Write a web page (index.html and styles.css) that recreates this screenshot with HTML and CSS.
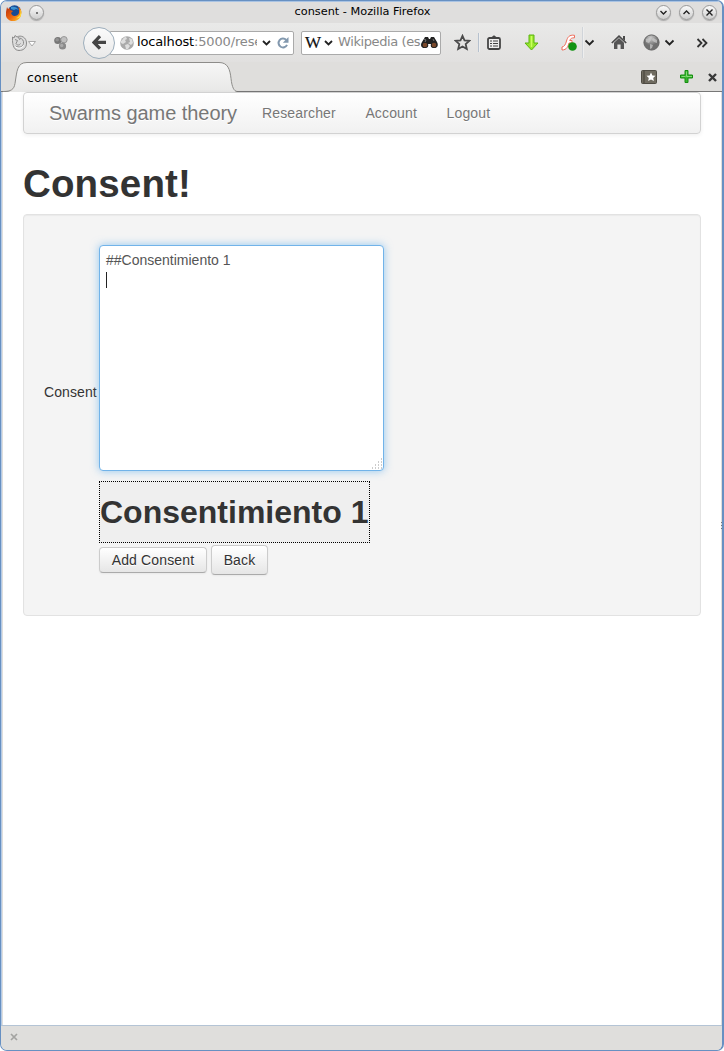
FILE: index.html
```html
<!DOCTYPE html>
<html lang="en">
<head>
<meta charset="utf-8">
<title>consent - Mozilla Firefox</title>
<link rel="stylesheet" href="styles.css">
</head>
<body>
<div class="window">
  <header class="titlebar">
    <svg class="fox" width="16" height="16" viewBox="0 0 16 16"><defs><linearGradient id="fire" x1="0" y1="0" x2="1" y2="1"><stop offset="0" stop-color="#b92e0b"/><stop offset=".55" stop-color="#ed6810"/><stop offset="1" stop-color="#ffd22f"/></linearGradient></defs><circle cx="8.5" cy="7" r="6.7" fill="#174b94"/><path d="M5 2C8 1 11 2 13 5l-3-1-2 1-3-1z" fill="#3b91d1"/><path d="M1 2l1 2 2-1v2l3 1-2 2 1 2c2 2 6 1 7-2V4l-1-2c3 1 4 4 3 8-1 4-4 6-8 6-5 0-8-4-7-9z" fill="url(#fire)"/><path d="M13 3c3 4 1 9-3 10 3 1 5-1 5-3 1-3 0-5-2-7z" fill="#ffdd38"/></svg>
    <span class="round pin"><i></i></span>
    <span class="window-title">consent - Mozilla Firefox</span>
    <div class="controls">
      <span class="round"><svg width="9" height="9" viewBox="0 0 9 9"><path d="M1.5 3l3 3 3-3"/></svg></span>
      <span class="round"><svg width="9" height="9" viewBox="0 0 9 9"><path d="M1.5 6l3-3 3 3"/></svg></span>
      <span class="round"><svg width="9" height="9" viewBox="0 0 9 9"><path d="M1.5 1.5l6 6m0-6l-6 6"/></svg></span>
    </div>
  </header>
  <div class="toolbar">
    <svg class="swirl" width="26" height="18" viewBox="0 0 26 18"><path d="M1.500 3l1.500 1 1-2.500L6 3C10 .5 15.500 3.500 15.500 9S12 16.500 8 16.500 1 13 1.500 3z" fill="#dcdcdc" stroke="#8c8c8c"/><path d="M4 5.500l2.500 1L5 9.500c1 2 3.500 2 4.500 0M8.500 4c3 .5 4.500 3 4 5.500-.7 3.500-4.500 4.500-8 2.500M7 3l2 3" fill="none" stroke="#8c8c8c"/><path d="M4 12.500c2.500 2.500 7 2 8.500-1" fill="none" stroke="#fff"/><path d="M17.500 7.500h7L21 12z" fill="#fff" stroke="#aaa"/></svg>
    <svg class="molecule" width="16" height="16" viewBox="0 0 16 16"><circle cx="4.8" cy="5.5" r="3.6" fill="#777"/><circle cx="4.2" cy="4.8" r="1.8" fill="#929292"/><circle cx="11" cy="4.7" r="3.2" fill="#c0c0c0" stroke="#999"/><circle cx="9.5" cy="11" r="3.6" fill="#8a8a8a"/><circle cx="8.7" cy="10.5" r="1.7" fill="#aaa"/></svg>
    <div class="location">
      <span class="back"><svg width="15" height="15" viewBox="0 0 15 15"><path d="M8 1.2L2 7.4l6 6.2M2.5 7.4H14" fill="none" stroke="#454545" stroke-width="3.2"/></svg></span>
      <div class="url">
        <svg width="14" height="14" viewBox="0 0 14 14"><circle cx="7" cy="7" r="6.8" fill="#aaa"/><path d="M1 5c2-1 2-4 5-4l1 2-2 1 1 2-3 2-2-1zM9 2l3 1 1 4-2 2-3-2 2-1zM5 9l3-1 2 2-2 3H6z" fill="#dedede"/></svg>
        <span class="address">localhost<span>:5000/rese</span></span>
        <svg class="chev" width="11" height="10" viewBox="0 0 11 10"><path d="M2 3l3.5 3.5L9 3"/></svg>
        <svg class="reload" width="12" height="12" viewBox="0 0 12 12"><path d="M10 7.8A4.4 4.4 0 1 1 9.2 3" fill="none" stroke="#8298ae" stroke-width="2"/><path d="M11.5 0v5.8H5.8z" fill="#8298ae"/></svg>
      </div>
    </div>
    <div class="search">
      <span class="w">W</span>
      <svg class="chev" width="11" height="10" viewBox="0 0 11 10"><path d="M2 3l3.5 3.5L9 3"/></svg>
      <span class="hint">Wikipedia (es</span>
      <svg class="binoc" width="17" height="13" viewBox="0 0 17 13"><path d="M4 1h3l1 2h1l1-2h3l3 5c2 4 0 6-3 6-2 0-4-1-3-4H7c1 3-1 4-3 4-4 0-5-3-3-6z" fill="#222"/><circle cx="4" cy="9" r="2.3" fill="#7a482a"/><circle cx="13" cy="9" r="2.3" fill="#7a482a"/><path d="M3 3l2 1-1 2M12 3l1 2" stroke="#777" fill="none"/></svg>
    </div>
    <svg class="star" width="17" height="17" viewBox="0 0 17 17"><path d="M8.5 1.8l2 4.5 4.9.5-3.7 3.3 1.1 4.9-4.3-2.5L4.200 15l1.100-4.900L1.600 6.800l4.900-.5z" fill="none" stroke="#4b4b4b" stroke-width="1.800"/></svg>
    <i class="sep"></i>
    <svg class="clip" width="14" height="15" viewBox="0 0 14 15"><path d="M4 2.500L7 .3l3 2.200z" fill="#444"/><rect x="1" y="3" width="12" height="11" rx="1.500" fill="#eee" stroke="#444" stroke-width="1.800"/><path d="M3 6h2m1 0h5M3 8.500h2m1 0h5M3 11h2m1 0h5" stroke="#444" stroke-width="1.200"/></svg>
    <svg class="down" width="15" height="17" viewBox="0 0 15 17"><path d="M5 1h5v8h4l-6.500 7L1 9h4z" fill="#97e62c" stroke="#5cb411" stroke-linejoin="round"/><path d="M7.500 2v11" stroke="#cbff5e" stroke-width="1.500"/></svg>
    <svg class="flash" width="16" height="17" viewBox="0 0 16 17"><path d="M13.500 1.300C8 .5 6.500 3.500 5.500 7S3.500 12.500 1 13v3c5 0 6-4 7-7h3V6.500H8.700c.8-2 2-2.800 4.800-2.700z" fill="#fff" stroke="#ee6b59"/><circle cx="11.500" cy="12.500" r="4.300" fill="#139313"/></svg>
    <i class="sep flash-sep"></i>
    <svg class="chev flash-chev" width="11" height="10" viewBox="0 0 11 10"><path d="M1.500 2.500l4 4 4-4"/></svg>
    <svg class="home" width="16" height="15" viewBox="0 0 16 15"><path d="M.8 8L8 1.200 15.200 8" fill="none" stroke="#4a4a4a" stroke-width="1.700"/><path d="M3 7.800L8 3l5 4.800V14H9.600V9.500H6.400V14H3z" fill="#555"/><path d="M12 1h2v5l-2-2z" fill="#4a4a4a"/></svg>
    <svg class="globe" width="17" height="17" viewBox="0 0 17 17"><defs><radialGradient id="metal" cx=".45" cy=".2"><stop stop-color="#ccc"/><stop offset="1" stop-color="#707070"/></radialGradient></defs><circle cx="8.500" cy="8.500" r="7.600" fill="url(#metal)" stroke="#646464"/><path d="M3 5l4-1 1 2-2 3-3-1zM10 4l4 2v3l-3-1-2-2zM7 10l3 1-1 3-2 1z" fill="#ccc" opacity=".7"/></svg>
    <svg class="chev globe-chev" width="11" height="10" viewBox="0 0 11 10"><path d="M1.500 2.500l4 4 4-4"/></svg>
    <svg class="more" width="12" height="10" viewBox="0 0 12 10"><path d="M1.500 1l4 4-4 4M6.500 1l4 4-4 4" fill="none" stroke="#333" stroke-width="1.800"/></svg>
  </div>
  <div class="tabs">
    <div class="tab">
      <svg width="234" height="30" viewBox="0 0 234 30"><defs><linearGradient id="tabfill" x2="0" y2="1"><stop stop-color="#f6f6f6"/><stop offset="1" stop-color="#e8e8e7"/></linearGradient></defs><path d="M0 30c8 0 11-2 12-8C14 9 14 .5 24 .5h192c9 0 11 7 12 16 1 9 3 12.500 6 13.500z" fill="url(#tabfill)"/><path d="M0 29.500c8 0 11-2 12-8C14 9 14 .5 24 .5h192c9 0 11 7 12 16 1 9 3 12.500 6 13" fill="none" stroke="#8d8c89"/></svg>
      <span>consent</span>
    </div>
    <svg class="bookmark" width="16" height="14" viewBox="0 0 16 14"><rect x=".5" y=".5" width="15" height="13" rx="1" fill="#6f6b60" stroke="#4f4c44"/><path d="M3 1v12" stroke="#444037"/><path d="M10 2.500l1.400 3 3.100.3-2.300 2.100.7 3.200-2.900-1.700-2.900 1.700.7-3.200-2.300-2.100 3.100-.3z" fill="#fff"/></svg>
    <svg class="add" width="15" height="15" viewBox="0 0 15 15"><path d="M6 1.500h3V6h4.500v3H9v4.500H6V9H1.500V6H6z" fill="#35b52c" stroke="#168d11" stroke-linejoin="round"/><path d="M7.500 2.500v5H13M2.500 7.500h4" stroke="#85d977" fill="none"/></svg>
    <svg class="close" width="9" height="9" viewBox="0 0 9 9"><path d="M1 1l7 7m0-7L1 8" stroke="#383838" stroke-width="2.400"/></svg>
  </div>
  <main class="page">
    <nav class="navbar"><a class="brand">Swarms game theory</a><a>Researcher</a><a>Account</a><a>Logout</a></nav>
    <h1>Consent!</h1>
    <section class="well">
      <div class="form">
        <label>Consent</label>
        <div class="editor"><span>##Consentimiento 1</span><i class="caret"></i>
          <svg class="grip" width="12" height="12" viewBox="0 0 12 12"><path d="M10 1h1M7 4h1m2 0h1M4 7h1m2 0h1m2 0h1M1 10h1m2 0h1m2 0h1m2 0h1" stroke="#999" stroke-width="1.200"/></svg>
        </div>
        <div class="preview"><h2>Consentimiento 1</h2></div>
        <div class="actions"><button class="add-consent">Add Consent</button><button class="go-back">Back</button></div>
      </div>
    </section>
    <i class="splitter"></i>
  </main>
  <footer><svg width="8" height="8" viewBox="0 0 8 8"><path d="M1 1l6 6m0-6L1 7" stroke="#a3a3a1" stroke-width="1.700"/></svg></footer>
</div>
</body>
</html>
```
FILE: styles.css
```css
* { box-sizing: border-box; }
body { margin: 0; width: 724px; height: 1051px; background: #fff; overflow: hidden; font-family: "Liberation Sans", Arial, sans-serif; }
svg { display: block; flex: none; }
.window { width: 724px; height: 1051px; display: flex; flex-direction: column; border: 1px solid #6790c2; border-right-width: 2px; border-radius: 7px; overflow: hidden; background: #dfdedc; box-shadow: inset 1px 1px #b4cae5; }
.titlebar { height: 22px; padding: 0 5px 0 5px; display: flex; align-items: center; background: #dfdedd; border-top: 1px solid #a9c3e3; position: relative; font: 11.3px "DejaVu Sans", sans-serif; }
.round { width: 15px; height: 15px; border-radius: 50%; border: 1px solid #999; background: linear-gradient(#fafafa, #cecece); box-shadow: 0 1px 1px #aaa; display: flex; align-items: center; justify-content: center; }
.round svg { fill: none; stroke: #222; stroke-width: 1.4; }
.pin { margin-left: 7px; }
.pin i { width: 2px; height: 2px; background: #777; }
.window-title { position: absolute; left: 1px; width: 100%; text-align: center; top: 3px; }
.controls { display: flex; gap: 8px; margin-left: auto; }
.toolbar { height: 39px; display: flex; align-items: center; padding-left: 10px; background: linear-gradient(#e9e9e8, #e1e0df); }
.molecule { margin-left: 16px; margin-right: 14px; }
.location { display: flex; align-items: center; }
.back { width: 32px; height: 32px; border-radius: 50%; border: 1px solid #9daebc; background: linear-gradient(#fbfbfb, #e9e9e9); display: flex; align-items: center; justify-content: center; position: relative; z-index: 1; }
.url { width: 184px; height: 24px; margin-left: -5px; padding-left: 9px; border: 1px solid #aaa; border-radius: 0 2px 2px 0; background: white; display: flex; align-items: center; font: 13px "DejaVu Sans", sans-serif; }
.address { width: 120px; margin-left: 3px; margin-top: -2px; letter-spacing: -.15px; white-space: nowrap; overflow: hidden; }
.address span { color: #888; }
.chev { fill: none; stroke: #222; stroke-width: 1.8; }
.url .chev { margin-left: 4px; }
.reload { margin-left: 5px; }
.search { margin-left: 7px; width: 140px; height: 24px; border: 1px solid #aaa; border-radius: 2px; background: white; display: flex; align-items: center; padding-left: 3px; font: 13px "DejaVu Sans", sans-serif; }
.w { width: 18px; font: 17px "Liberation Serif", serif; color: #111; -webkit-text-stroke: .2px #111; }
.hint { width: 83px; margin-left: 4px; margin-top: -2px; color: #888; letter-spacing: -.4px; white-space: nowrap; }
.star { margin-left: 13px; }
.sep { width: 1px; height: 19px; background: #b6c1ce; margin-left: 7px; box-shadow: 1px 0 #eee; }
.clip { margin-left: 8px; }
.down { margin-left: 23px; }
.flash { margin-left: 22px; }
.flash-sep { margin-left: 5px; height: 31px; background: #d0d4d9; }
.flash-chev { margin-left: 1px; }
.home { margin-left: 16px; }
.globe { margin-left: 16px; }
.globe-chev { margin-left: 4px; }
.more { margin-left: 21px; }
.tabs { height: 30px; display: flex; align-items: center; padding-left: 2px; border-bottom: 1px solid #777; background: #dfdedc; font: 12.5px "DejaVu Sans", sans-serif; }
.tab { width: 234px; height: 30px; flex: none; position: relative; margin-top: 1px; }
.tab svg { position: absolute; left: 0; top: 0; }
.tab span { position: absolute; left: 24px; top: 8px; letter-spacing: .2px; }
.bookmark { margin-left: 404px; }
.add { margin-left: 22px; }
.close { margin-left: 14px; margin-top: 2px; }
.page { height: 933px; margin: 0 1px 0 2px; padding: 0 20px; background: white; position: relative; }
.navbar { height: 42px; display: flex; align-items: center; padding-left: 25px; border: 1px solid #d2d2d2; border-radius: 4px; background: linear-gradient(#fff, #f1f1f1); box-shadow: 0 1px 4px rgba(0,0,0,.07); color: #777; font-size: 14px; letter-spacing: .15px; text-shadow: 0 1px #fff; }
.navbar a { margin-right: 29.5px; white-space: nowrap; }
.navbar .brand { width: 188px; margin-right: 25px; font-size: 20px; letter-spacing: -.05px; }
h1 { margin: 30px 0 10px; height: 40px; line-height: 40px; font-size: 38.5px; letter-spacing: .15px; color: #333; white-space: nowrap; }
.well { height: 402px; padding: 30px 20px; border: 1px solid #e2e2e2; border-radius: 4px; background: #f4f4f4; box-shadow: inset 0 1px 1px rgba(0,0,0,.04); }
.form { display: grid; grid-template: 226px 82px 30px / 55px max-content; color: #333; font-size: 14px; }
label { align-self: center; margin-top: 68px; letter-spacing: .1px; }
.editor { width: 285px; height: 226px; border: 1px solid #71b3e9; border-radius: 4px; background: white; box-shadow: 0 0 8px rgba(82,168,236,.6); padding: 4px 6px; position: relative; line-height: 20px; color: #555; letter-spacing: 0; }
.caret { display: block; width: 1px; height: 16px; margin-top: 2px; background: #222; }
.grip { position: absolute; right: 0; bottom: 0; }
.preview { grid-column: 2; width: 271px; height: 62px; margin-top: 10px; border: 1px dotted #000; background: #efefef; }
h2 { margin: 10px 0 0; line-height: 40px; font-size: 32px; color: #333; white-space: nowrap; }
.actions { grid-column: 2; display: flex; align-items: center; gap: 4px; margin-top: -17px; }
button { padding: 0; border: 1px solid #ccc; border-bottom-color: #aaa; border-radius: 4px; background: linear-gradient(#fff, #e6e6e6); color: #333; font: 14px "Liberation Sans", Arial, sans-serif; letter-spacing: .15px; text-shadow: 0 1px #fff; box-shadow: 0 1px 2px rgba(0,0,0,.05); }
.add-consent { width: 108px; height: 26px; }
.go-back { width: 57px; height: 30px; }
.splitter { position: absolute; right: -1px; top: 430px; width: 1px; height: 8px; background: repeating-linear-gradient(#777 0 1px, #ddd 1px 3px); }
footer { flex: 1; border-top: 1px solid #b4c4d5; padding: 7px 9px; background: #dfdedc; }
```
